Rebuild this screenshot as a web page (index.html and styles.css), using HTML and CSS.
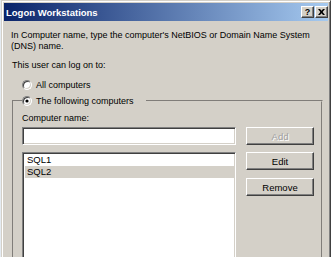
FILE: index.html
```html
<!DOCTYPE html>
<html lang="en">
<head>
<meta charset="UTF-8">
<meta name="viewport" content="width=device-width, initial-scale=1.0">
<title>Logon Workstations</title>
<link rel="stylesheet" href="styles.css">
</head>
<body>

<div class="window">
    <div class="titlebar">
        <span class="title">Logon Workstations</span>
        <div class="caption-buttons">
            <span class="cap-btn">?</span>
            <span class="cap-btn">
                <svg width="7" height="6" viewBox="0 0 7 6"><path d="M0 0h2l1.5 1.8L5 0h2L4.6 3 7 6H5L3.5 4.2 2 6H0l2.4-3z" fill="#000"/></svg>
            </span>
        </div>
    </div>

    <div class="content">
        <p class="intro">In Computer name, type the computer's NetBIOS or Domain Name System (DNS) name.</p>
        <p class="lead">This user can log on to:</p>

        <div class="radio"><span class="radio-dot"></span>All computers</div>

        <fieldset class="group">
            <legend><div class="radio"><span class="radio-dot checked"></span>The following computers</div></legend>

            <div class="field-label">Computer name:</div>
            <div class="row">
                <div class="textbox"></div>
                <button class="btn" disabled>Add</button>
            </div>

            <div class="row list-row">
                <div class="listbox">
                    <div class="item">SQL1</div>
                    <div class="item selected">SQL2</div>
                </div>
                <div class="side-buttons">
                    <button class="btn">Edit</button>
                    <button class="btn">Remove</button>
                </div>
            </div>
        </fieldset>
    </div>
</div>

</body>
</html>
```

FILE: styles.css
```css
body {
    margin: 0;
    padding: 0;
    background-color: #e4ebf2;
    font-family: "Liberation Sans", Arial, sans-serif;
    font-size: 9px;
    color: #000;
    overflow: hidden;
    height: 257px;
}
.window {
    margin-left: 1px;
    width: 330px;
    height: 300px;
    box-sizing: border-box;
    background-color: #d4d0c8;
    border: 1px solid;
    border-color: #d4d0c8 #404040 #404040 #d4d0c8;
    padding: 2px;
    box-shadow: inset 1px 1px #fff, inset -1px -1px #808080;
}
.titlebar {
    height: 18px;
    display: flex;
    align-items: center;
    justify-content: space-between;
    background: linear-gradient(to right, #0a246a, #a6caf0);
    padding: 0 0 0 2px;
}
.title {
    color: #fff;
    font-weight: bold;
    font-size: 9.5px;
}
.caption-buttons {
    display: flex;
    gap: 1px;
}
.cap-btn {
    width: 13px;
    height: 12px;
    box-sizing: border-box;
    background-color: #d4d0c8;
    border: 1px solid;
    border-color: #fff #404040 #404040 #fff;
    box-shadow: inset -1px -1px #808080;
    display: flex;
    align-items: center;
    justify-content: center;
    font-weight: bold;
    font-size: 9px;
    line-height: 1;
}
.content {
    padding: 9px 0 0 7px;
}
.intro {
    margin: 0;
    line-height: 11px;
    width: 312px;
}
.lead {
    margin: 8px 0 0 1px;
    line-height: 11px;
}
.radio {
    display: flex;
    align-items: center;
    gap: 4px;
    height: 12px;
    line-height: 11px;
}
.content > .radio {
    margin: 8px 0 0 11px;
}
.radio-dot {
    width: 10px;
    height: 10px;
    box-sizing: border-box;
    border-radius: 50%;
    background-color: #fff;
    border: 1px solid;
    border-color: #808080 #fff #fff #808080;
    box-shadow: inset 1px 1px #404040, inset -1px -1px #d4d0c8;
    position: relative;
}
.radio-dot.checked::after {
    content: '';
    position: absolute;
    top: 3px;
    left: 3px;
    width: 2px;
    height: 2px;
    border-radius: 50%;
    background-color: #000;
    box-shadow: 0 0 0 0.6px #000;
}
.group {
    margin: 4px 5px 0 1px;
    padding: 6px 7px 0 8px;
    border: 2px groove #d4d0c8;
    height: 200px;
}
.group legend {
    padding: 0 12px 0 0;
    margin: 0;
}
.field-label {
    line-height: 11px;
    margin-bottom: 3px;
}
.row {
    display: flex;
    justify-content: space-between;
    align-items: flex-start;
}
.textbox,
.listbox {
    width: 214px;
    box-sizing: border-box;
    background-color: #fff;
    border: 1px solid;
    border-color: #808080 #fff #fff #808080;
    box-shadow: inset 1px 1px #404040, inset -1px -1px #d4d0c8;
}
.textbox {
    height: 18px;
}
.list-row {
    margin-top: 7px;
}
.listbox {
    height: 140px;
    padding: 1px 0 0 2px;
}
.item {
    height: 12px;
    line-height: 12px;
    padding-left: 2px;
    font-size: 9.5px;
}
.item.selected {
    background-color: #d4d0c8;
}
.btn {
    width: 68px;
    height: 18px;
    box-sizing: border-box;
    margin: 0;
    padding: 0;
    background-color: #d4d0c8;
    border: 1px solid;
    border-color: #fff #404040 #404040 #fff;
    box-shadow: inset -1px -1px #808080;
    font-family: "Liberation Sans", Arial, sans-serif;
    font-size: 9.5px;
    color: #000;
}
.btn:disabled {
    color: #a0a0a0;
    text-shadow: 1px 1px #fff;
}
.side-buttons {
    display: flex;
    flex-direction: column;
    gap: 8px;
}
```
